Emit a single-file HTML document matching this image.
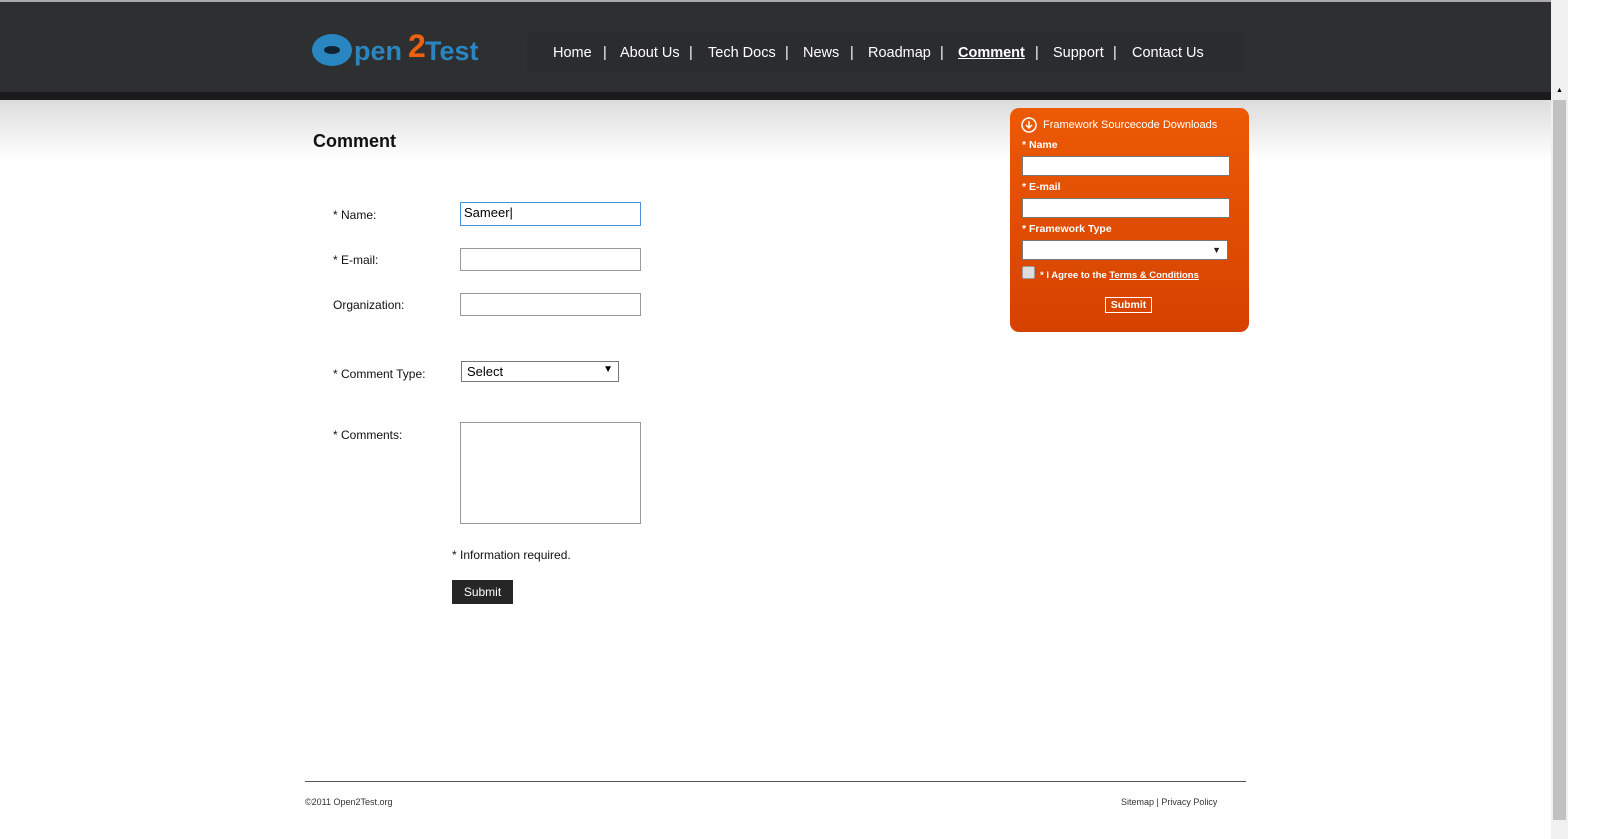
<!DOCTYPE html>
<html><head><style>
body{margin:0;width:1600px;height:839px;background:#fff;font-family:"Liberation Sans",Arial,sans-serif;position:relative;overflow:hidden}
.hdr{position:absolute;left:0;top:0;width:1551px;height:92px;background:#2d2f30;border-top:2px solid #aaa;box-sizing:border-box}
.band{position:absolute;left:0;top:92px;width:1551px;height:8px;background:#1b1a1d}
.grad{position:absolute;left:0;top:100px;width:1551px;height:60px;background:linear-gradient(#dcdcdc,#fff)}
.nav{position:absolute;left:527px;top:33px;width:718px;height:40px;background:#2a2c2d;color:#fff;font-size:14.5px;line-height:40px}
.nav span{position:absolute}
.sb{position:absolute;left:1551px;top:0;width:17px;height:839px;background:#f0f0f0}
.sb .th{position:absolute;left:2px;top:100px;width:13px;height:720px;background:#c1c1c1}
.lbl{position:absolute;font-size:12px;color:#111}
.inp{position:absolute;border:1px solid #999;background:#fff;box-sizing:border-box}
.box{position:absolute;left:1010px;top:108px;width:239px;height:224px;border-radius:9px;background:linear-gradient(#ec5a05,#d54200);color:#fff}
.box b{position:absolute;font-size:10.5px}
.box .i{position:absolute;left:12px;width:208px;height:20px;background:#fff;border:1px solid #777;box-sizing:border-box}
</style></head><body>
<div class="hdr"></div><div class="band"></div><div class="grad"></div>
<svg style="position:absolute;left:310px;top:25px" width="185" height="48">
<ellipse cx="22" cy="25" rx="20" ry="16" fill="#2a86c0"/><ellipse cx="22" cy="25" rx="8" ry="4" fill="#123"/>
<text x="44" y="35" font-family="Liberation Sans" font-weight="bold" font-size="27" fill="#2a86c0">pen</text>
<text x="98" y="32" font-family="Liberation Sans" font-weight="bold" font-size="32" fill="#ee6010">2</text>
<text x="115" y="35" font-family="Liberation Sans" font-weight="bold" font-size="27" fill="#2a86c0">Test</text>
</svg>
<div class="nav">
<span style="left:26px">Home</span><span style="left:76px">|</span><span style="left:93px">About Us</span><span style="left:162px">|</span>
<span style="left:181px">Tech Docs</span><span style="left:258px">|</span><span style="left:276px">News</span><span style="left:323px">|</span>
<span style="left:341px">Roadmap</span><span style="left:413px">|</span><span style="left:431px;font-weight:bold;text-decoration:underline">Comment</span><span style="left:508px">|</span>
<span style="left:526px">Support</span><span style="left:586px">|</span><span style="left:605px">Contact Us</span>
</div>
<div style="position:absolute;left:313px;top:131px;font-size:18px;font-weight:bold;color:#111">Comment</div>
<div class="lbl" style="left:333px;top:208px">* Name:</div>
<div class="inp" style="left:460px;top:202px;width:181px;height:24px;border:1px solid #4a90d9;font-size:13px;padding:2px 3px">Sameer|</div>
<div class="lbl" style="left:333px;top:253px">* E-mail:</div>
<div class="inp" style="left:460px;top:248px;width:181px;height:23px"></div>
<div class="lbl" style="left:333px;top:298px">Organization:</div>
<div class="inp" style="left:460px;top:293px;width:181px;height:23px"></div>
<div class="lbl" style="left:333px;top:367px">* Comment Type:</div>
<div class="inp" style="left:461px;top:361px;width:158px;height:21px;font-size:13px;padding:2px 5px;border-color:#777">Select<span style="float:right;font-size:10px">▼</span></div>
<div class="lbl" style="left:333px;top:428px">* Comments:</div>
<div class="inp" style="left:460px;top:422px;width:181px;height:102px"></div>
<div class="lbl" style="left:452px;top:548px">* Information required.</div>
<div style="position:absolute;left:452px;top:580px;width:61px;height:24px;background:#262626;color:#fff;font-size:12px;text-align:center;line-height:24px">Submit</div>
<div class="box">
<svg style="position:absolute;left:11px;top:9px" width="16" height="16"><circle cx="8" cy="8" r="7" fill="none" stroke="#fff" stroke-width="1.5"/><path d="M8 4v7M5 8l3 3 3-3" stroke="#fff" stroke-width="1.5" fill="none"/></svg>
<span style="position:absolute;left:33px;top:11px;font-size:11px">Framework Sourcecode Downloads</span>
<b style="left:12px;top:31px">* Name</b><div class="i" style="top:48px"></div>
<b style="left:12px;top:73px">* E-mail</b><div class="i" style="top:90px"></div>
<b style="left:12px;top:115px">* Framework Type</b><div class="i" style="top:132px;width:206px;color:#222;font-size:9px;text-align:right;padding-right:6px;line-height:18px">▼</div>
<div style="position:absolute;left:12px;top:158px;width:11px;height:11px;background:#ddd;border:1px solid #999;border-radius:2px"></div>
<b style="left:30px;top:162px;font-size:9.5px">* I Agree to the <u>Terms &amp; Conditions</u></b>
<div style="position:absolute;left:95px;top:189px;width:45px;height:14px;border:1px solid #fff;font-size:10.5px;font-weight:bold;text-align:center;line-height:14px">Submit</div>
</div>
<div style="position:absolute;left:305px;top:781px;width:941px;height:1px;background:#555"></div>
<div style="position:absolute;left:305px;top:797px;font-size:9px;color:#333">©2011 Open2Test.org</div>
<div style="position:absolute;left:1121px;top:797px;font-size:9px;color:#333">Sitemap | Privacy Policy</div>
<div class="sb"><div class="th"></div><div style="position:absolute;left:5px;top:87px;font-size:7px">▲</div></div>
</body></html>
